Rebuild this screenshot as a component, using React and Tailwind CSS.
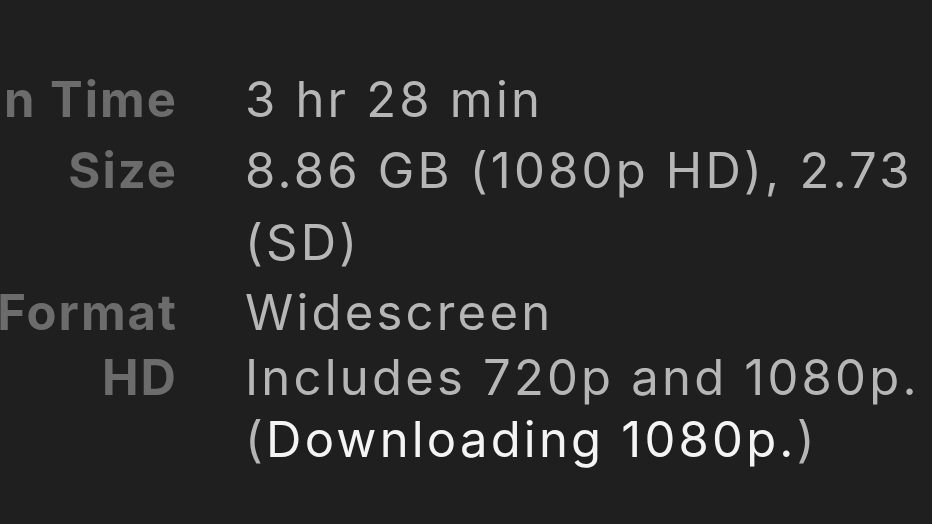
import React from 'react';

const rows = [
  { label: 'Run Time', lines: [<>3 hr 28 min</>], lead: 'leading-[70px]' },
  { label: 'Size', lines: [<>8.86 GB (1080p HD), 2.73</>, <>(SD)</>], lead: 'leading-[72px]' },
  { label: 'Format', lines: [<>Widescreen</>], lead: 'leading-[68px]' },
  {
    label: 'HD',
    lines: [
      <>Includes 720p and 1080p.</>,
      <>(<span className="text-[#f4f4f4]">Downloading 1080p.</span>)</>,
    ],
    lead: 'leading-[62px]',
  },
];

const App = () => {
  return (
    <div
      className="w-[932px] h-[524px] overflow-hidden bg-[#1f1f1f] pt-[65px]"
      style={{ fontFamily: 'Inter, "Noto Sans", sans-serif' }}
    >
      {rows.map((row) => (
        <div key={row.label} className="flex">
          <div className={`w-[178px] shrink-0 flex justify-end text-[49px] tracking-[2px] font-bold text-[#6c6c6c] whitespace-nowrap ${row.lead}`}>
            {row.label}
          </div>
          <div className={`ml-[67px] text-[49px] tracking-[3.2px] text-[#b6b6b6] ${row.lead}`}>
            {row.lines.map((line, i) => (
              <div key={i} className="whitespace-nowrap">{line}</div>
            ))}
          </div>
        </div>
      ))}
    </div>
  );
};

export default App;
